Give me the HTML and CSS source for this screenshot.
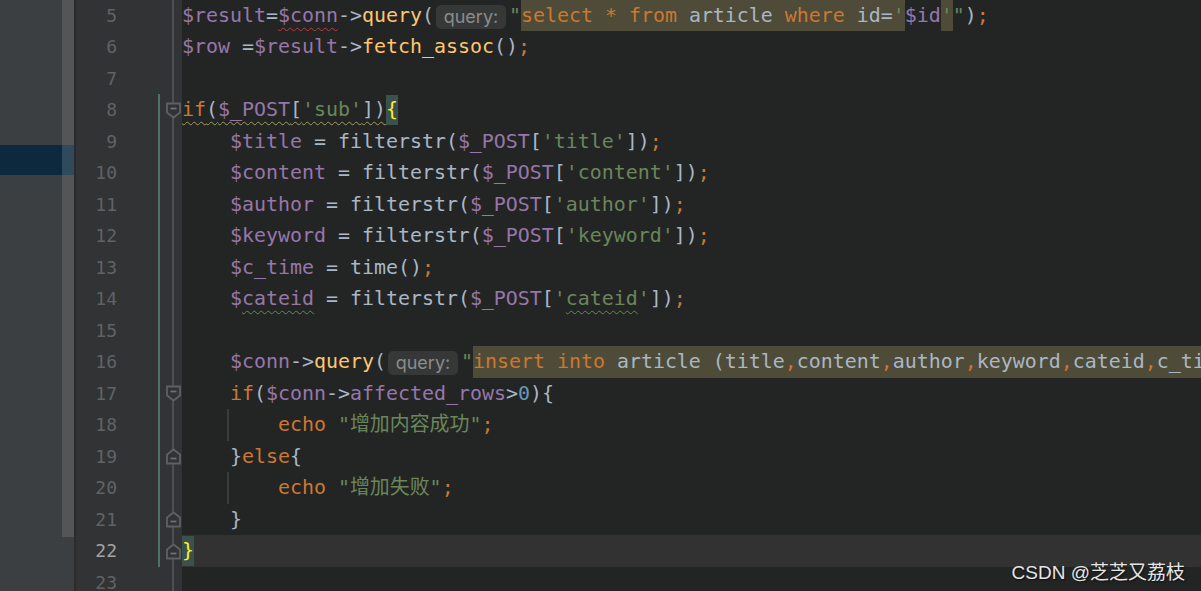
FILE: index.html
```html
<!DOCTYPE html>
<html lang="zh-CN">
<head>
    <meta charset="UTF-8">
    <meta name="viewport" content="width=device-width, initial-scale=1.0">
    <title>article.php</title>
    <link rel="stylesheet" href="styles.css">
</head>
<body>
    <div class="side">
        <div class="side-part top"><div class="panel"></div><div class="thumb"></div></div>
        <div class="side-part sel"><div class="panel"></div><div class="thumb"></div></div>
        <div class="side-part mid"><div class="panel"></div><div class="thumb"></div></div>
        <div class="side-part rest"><div class="panel"></div><div class="thumb off"></div></div>
    </div>
    <div class="sep"></div>

    <div class="editor">
        <!-- line 5 -->
        <div class="row">
            <div class="gut"><span class="num">5</span><span class="chg"></span><span class="fold"></span></div>
            <div class="code"><span class="v">$result</span>=<span class="v wr">$conn</span>-&gt;<span class="m">query</span>(<span class="hint">query:</span><span class="s">"</span><span class="hl"><span class="k">select</span> <span class="k">*</span> <span class="k">from</span> article <span class="k">where</span> id=<span class="s">'</span></span><span class="v">$id</span><span class="hl"><span class="s">'</span></span><span class="s">"</span>)<span class="k">;</span></div>
        </div>
        <!-- line 6 -->
        <div class="row">
            <div class="gut"><span class="num">6</span><span class="chg"></span><span class="fold"></span></div>
            <div class="code"><span class="v">$row</span> =<span class="v">$result</span>-&gt;<span class="m">fetch_assoc</span>()<span class="k">;</span></div>
        </div>
        <!-- line 7 -->
        <div class="row">
            <div class="gut"><span class="num">7</span><span class="chg"></span><span class="fold"></span></div>
            <div class="code"></div>
        </div>
        <!-- line 8 -->
        <div class="row">
            <div class="gut"><span class="num">8</span><span class="chg on"></span><span class="fold">
                <svg width="15" height="17" viewBox="0 0 15 17"><path d="M1 1.5H14V10.5L7.5 15.5L1 10.5Z" fill="#313335" stroke="#5e6163" stroke-width="1.8"/><path d="M4.5 6.5H10.5" stroke="#6e7173" stroke-width="1.8"/></svg>
            </span></div>
            <div class="code"><span class="wy"><span class="k">if</span>(<span class="v">$_POST</span>[<span class="s">'sub'</span>])<span class="brace">{</span></span></div>
        </div>
        <!-- line 9 -->
        <div class="row">
            <div class="gut"><span class="num">9</span><span class="chg on"></span><span class="fold"></span></div>
            <div class="code">    <span class="v">$title</span> = filterstr(<span class="v">$_POST</span>[<span class="s">'title'</span>])<span class="k">;</span></div>
        </div>
        <!-- line 10 -->
        <div class="row">
            <div class="gut"><span class="num">10</span><span class="chg on"></span><span class="fold"></span></div>
            <div class="code">    <span class="v">$content</span> = filterstr(<span class="v">$_POST</span>[<span class="s">'content'</span>])<span class="k">;</span></div>
        </div>
        <!-- line 11 -->
        <div class="row">
            <div class="gut"><span class="num">11</span><span class="chg on"></span><span class="fold"></span></div>
            <div class="code">    <span class="v">$author</span> = filterstr(<span class="v">$_POST</span>[<span class="s">'author'</span>])<span class="k">;</span></div>
        </div>
        <!-- line 12 -->
        <div class="row">
            <div class="gut"><span class="num">12</span><span class="chg on"></span><span class="fold"></span></div>
            <div class="code">    <span class="v">$keyword</span> = filterstr(<span class="v">$_POST</span>[<span class="s">'keyword'</span>])<span class="k">;</span></div>
        </div>
        <!-- line 13 -->
        <div class="row">
            <div class="gut"><span class="num">13</span><span class="chg on"></span><span class="fold"></span></div>
            <div class="code">    <span class="v">$c_time</span> = time()<span class="k">;</span></div>
        </div>
        <!-- line 14 -->
        <div class="row">
            <div class="gut"><span class="num">14</span><span class="chg on"></span><span class="fold"></span></div>
            <div class="code">    <span class="v">$<span class="wg">cateid</span></span> = filterstr(<span class="v">$_POST</span>[<span class="s">'<span class="wg">cateid</span>'</span>])<span class="k">;</span></div>
        </div>
        <!-- line 15 -->
        <div class="row">
            <div class="gut"><span class="num">15</span><span class="chg on"></span><span class="fold"></span></div>
            <div class="code"></div>
        </div>
        <!-- line 16 -->
        <div class="row">
            <div class="gut"><span class="num">16</span><span class="chg on"></span><span class="fold"></span></div>
            <div class="code">    <span class="v">$conn</span>-&gt;<span class="m">query</span>(<span class="hint">query:</span><span class="s">"</span><span class="hl"><span class="k">insert</span> <span class="k">into</span> article (title<span class="k">,</span>content<span class="k">,</span>author<span class="k">,</span>keyword<span class="k">,</span>cateid<span class="k">,</span>c_ti</span></div>
        </div>
        <!-- line 17 -->
        <div class="row">
            <div class="gut"><span class="num">17</span><span class="chg on"></span><span class="fold">
                <svg width="15" height="17" viewBox="0 0 15 17"><path d="M1 1.5H14V10.5L7.5 15.5L1 10.5Z" fill="#313335" stroke="#5e6163" stroke-width="1.8"/><path d="M4.5 6.5H10.5" stroke="#6e7173" stroke-width="1.8"/></svg>
            </span></div>
            <div class="code">    <span class="k">if</span>(<span class="v">$conn</span>-&gt;<span class="v">affected_rows</span>&gt;<span class="n">0</span>){</div>
        </div>
        <!-- line 18 -->
        <div class="row">
            <div class="gut"><span class="num">18</span><span class="chg on"></span><span class="fold"></span></div>
            <div class="code guide">        <span class="k">echo</span> <span class="s">"增加内容成功"</span><span class="k">;</span></div>
        </div>
        <!-- line 19 -->
        <div class="row">
            <div class="gut"><span class="num">19</span><span class="chg on"></span><span class="fold">
                <svg width="15" height="17" viewBox="0 0 15 17"><path d="M1 15.5H14V6.5L7.5 1.5L1 6.5Z" fill="#313335" stroke="#5e6163" stroke-width="1.8"/><path d="M4.5 10.5H10.5" stroke="#6e7173" stroke-width="1.8"/></svg>
            </span></div>
            <div class="code">    }<span class="k">else</span>{</div>
        </div>
        <!-- line 20 -->
        <div class="row">
            <div class="gut"><span class="num">20</span><span class="chg on"></span><span class="fold"></span></div>
            <div class="code guide">        <span class="k">echo</span> <span class="s">"增加失败"</span><span class="k">;</span></div>
        </div>
        <!-- line 21 -->
        <div class="row">
            <div class="gut"><span class="num">21</span><span class="chg on"></span><span class="fold">
                <svg width="15" height="17" viewBox="0 0 15 17"><path d="M1 15.5H14V6.5L7.5 1.5L1 6.5Z" fill="#313335" stroke="#5e6163" stroke-width="1.8"/><path d="M4.5 10.5H10.5" stroke="#6e7173" stroke-width="1.8"/></svg>
            </span></div>
            <div class="code">    }</div>
        </div>
        <!-- line 22 (caret line) -->
        <div class="row">
            <div class="gut"><span class="num cur">22</span><span class="chg on"></span><span class="fold">
                <svg width="15" height="17" viewBox="0 0 15 17"><path d="M1 15.5H14V6.5L7.5 1.5L1 6.5Z" fill="#313335" stroke="#5e6163" stroke-width="1.8"/><path d="M4.5 10.5H10.5" stroke="#6e7173" stroke-width="1.8"/></svg>
            </span></div>
            <div class="code current"><span class="brace">}</span></div>
        </div>
        <!-- line 23 -->
        <div class="row">
            <div class="gut"><span class="num">23</span><span class="chg"></span><span class="fold"></span></div>
            <div class="code"></div>
        </div>
    </div>

    <div class="watermark">CSDN @芝芝又荔枝</div>
</body>
</html>
```

FILE: styles.css
```css
html, body { margin: 0; padding: 0; height: 100%; overflow: hidden; }
body { display: flex; background-color: #232525; font-family: "DejaVu Sans Mono", "Noto Sans CJK SC", monospace; }

/* project tool window on the left */
.side { width: 74px; display: flex; flex-direction: column; flex-shrink: 0; }
.side-part { display: flex; }
.side-part.top { height: 145px; }
.side-part.sel { height: 30px; }
.side-part.mid { height: 362px; }
.side-part.rest { flex: 1; }
.panel { width: 62px; background-color: #3c3f41; }
.thumb { width: 12px; background-color: #535557; }
.thumb.off { background-color: #3c3f41; }
.sel .panel { background-color: #0d293e; }
.sel .thumb { background-color: #2f4a5d; }
.sep { width: 2px; background-color: #2b2b2b; flex-shrink: 0; }

/* editor: 31.5px line pitch, alternating 31/32 to stay on whole pixels */
.editor { flex: 1; display: flex; flex-direction: column; min-width: 0; }
.row { display: flex; height: 31px; flex-shrink: 0; }
.row:nth-child(even) { height: 32px; }
.gut { width: 106px; display: flex; background-color: #313335; flex-shrink: 0; }
.num { width: 41px; text-align: right; color: #606366; font-size: 18px; line-height: 31px; }
.num.cur { color: #a4a3a3; }
.chg { width: 2px; margin-left: 41px; }
.chg.on { background-color: #4a7566; }
.fold { width: 22px; display: flex; align-items: center; padding-left: 6px; box-sizing: border-box; background: linear-gradient(90deg, transparent 12px, #4d5052 12px, #4d5052 14px, transparent 14px); }
.fold svg { display: block; }

.code { flex: 1; min-width: 0; overflow: hidden; white-space: pre; font-size: 19.93px; line-height: 31px; color: #a9b7c6; }
.code.current { background-color: #323232; }
.code.guide { background: linear-gradient(90deg, transparent 45px, #3a3c3c 45px, #3a3c3c 47px, transparent 47px); }

/* syntax colours */
.v { color: #9876aa; }
.k { color: #cc7832; }
.s { color: #6a8759; }
.m { color: #ffc66d; }
.n { color: #6897bb; }
.hl { display: inline-block; line-height: 32px; vertical-align: top; background-color: #4e4b38; }
.brace { display: inline-block; line-height: 30px; color: #ffef28; background-color: #3b514d; }

/* inspections */
.wr, .wy, .wg { text-decoration-line: underline; text-decoration-style: wavy; text-decoration-thickness: 1px; text-underline-offset: 5px; text-decoration-skip-ink: none; }
.wr { text-decoration-color: #bc3f3c; }
.wy { text-decoration-color: #a29d5e; }
.wg { text-decoration-color: #5f8d4e; }

/* parameter hint */
.hint { display: inline-block; width: 70px; height: 24px; margin: 0 3px 0 2px; line-height: 24px; vertical-align: middle; text-align: center; border-radius: 5px; background-color: #363838; color: #8a8c8c; font-family: Inter, "Noto Sans", sans-serif; font-size: 18px; }

.watermark { position: absolute; right: 16px; bottom: 7px; color: #e6e6e6; font-family: "Liberation Sans", "Noto Sans CJK SC", sans-serif; font-size: 19px; text-shadow: 1px 1px 2px rgba(0, 0, 0, 0.7); }
```
